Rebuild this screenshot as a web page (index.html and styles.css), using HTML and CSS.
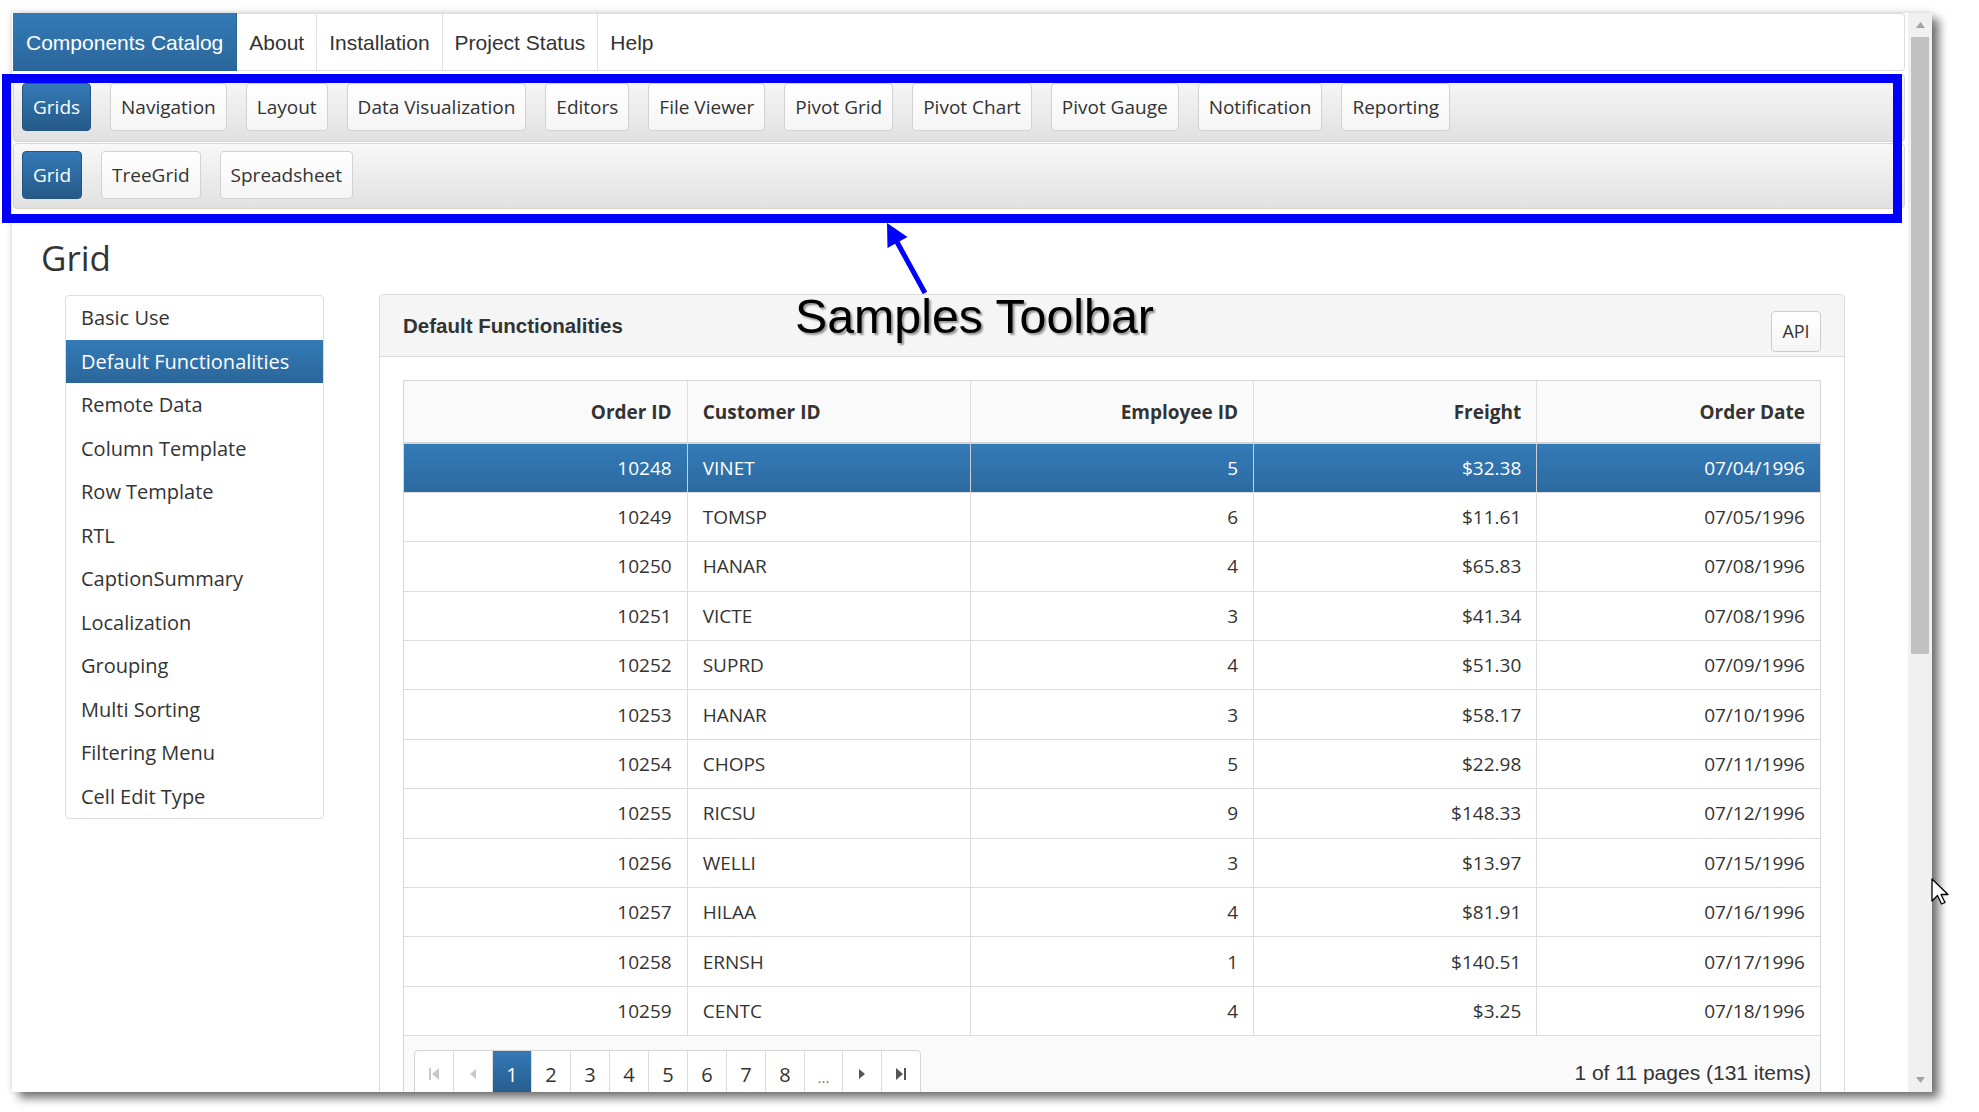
FILE: index.html
```html
<!DOCTYPE html>
<html lang="en">
<head>
<meta charset="utf-8">
<title>Components Catalog - Grid</title>
<link rel="stylesheet" href="styles.css">
</head>
<body>
<div class="window">
  <div class="viewport">
    <nav class="topnav">
      <a class="nav-item active">Components Catalog</a>
      <a class="nav-item">About</a>
      <a class="nav-item">Installation</a>
      <a class="nav-item">Project Status</a>
      <a class="nav-item">Help</a>
    </nav>
    <div class="band band-1">
      <button class="btn active">Grids</button>
      <button class="btn">Navigation</button>
      <button class="btn">Layout</button>
      <button class="btn">Data Visualization</button>
      <button class="btn">Editors</button>
      <button class="btn">File Viewer</button>
      <button class="btn">Pivot Grid</button>
      <button class="btn">Pivot Chart</button>
      <button class="btn">Pivot Gauge</button>
      <button class="btn">Notification</button>
      <button class="btn">Reporting</button>
    </div>
    <div class="band band-2">
      <button class="btn active">Grid</button>
      <button class="btn">TreeGrid</button>
      <button class="btn">Spreadsheet</button>
    </div>
    <div class="content">
      <h1 class="page-title">Grid</h1>
      <div class="columns">
        <ul class="sample-list">
          <li>Basic Use</li>
          <li class="active">Default Functionalities</li>
          <li>Remote Data</li>
          <li>Column Template</li>
          <li>Row Template</li>
          <li>RTL</li>
          <li>CaptionSummary</li>
          <li>Localization</li>
          <li>Grouping</li>
          <li>Multi Sorting</li>
          <li>Filtering Menu</li>
          <li>Cell Edit Type</li>
        </ul>
        <section class="panel">
          <header class="panel-head">
            <span class="panel-title">Default Functionalities</span>
            <button class="api-btn">API</button>
          </header>
          <div class="panel-body">
            <div class="grid">
              <table>
                <thead>
                  <tr>
                    <th>Order ID</th>
                    <th class="left">Customer ID</th>
                    <th>Employee ID</th>
                    <th>Freight</th>
                    <th>Order Date</th>
                  </tr>
                </thead>
                <tbody>
                  <tr class="selected"><td>10248</td><td class="left">VINET</td><td>5</td><td>$32.38</td><td>07/04/1996</td></tr>
                  <tr><td>10249</td><td class="left">TOMSP</td><td>6</td><td>$11.61</td><td>07/05/1996</td></tr>
                  <tr><td>10250</td><td class="left">HANAR</td><td>4</td><td>$65.83</td><td>07/08/1996</td></tr>
                  <tr><td>10251</td><td class="left">VICTE</td><td>3</td><td>$41.34</td><td>07/08/1996</td></tr>
                  <tr><td>10252</td><td class="left">SUPRD</td><td>4</td><td>$51.30</td><td>07/09/1996</td></tr>
                  <tr><td>10253</td><td class="left">HANAR</td><td>3</td><td>$58.17</td><td>07/10/1996</td></tr>
                  <tr><td>10254</td><td class="left">CHOPS</td><td>5</td><td>$22.98</td><td>07/11/1996</td></tr>
                  <tr><td>10255</td><td class="left">RICSU</td><td>9</td><td>$148.33</td><td>07/12/1996</td></tr>
                  <tr><td>10256</td><td class="left">WELLI</td><td>3</td><td>$13.97</td><td>07/15/1996</td></tr>
                  <tr><td>10257</td><td class="left">HILAA</td><td>4</td><td>$81.91</td><td>07/16/1996</td></tr>
                  <tr><td>10258</td><td class="left">ERNSH</td><td>1</td><td>$140.51</td><td>07/17/1996</td></tr>
                  <tr><td>10259</td><td class="left">CENTC</td><td>4</td><td>$3.25</td><td>07/18/1996</td></tr>
                </tbody>
              </table>
              <div class="pager">
                <div class="pages">
                  <span class="pg disabled"><svg width="12" height="14" viewBox="0 0 12 14"><rect x="1" y="1" width="2" height="12"/><path d="M11 1 L4 7 L11 13 Z"/></svg></span>
                  <span class="pg disabled"><svg width="8" height="14" viewBox="0 0 8 14"><path d="M7 2 L1 7 L7 12 Z"/></svg></span>
                  <span class="pg current">1</span>
                  <span class="pg">2</span>
                  <span class="pg">3</span>
                  <span class="pg">4</span>
                  <span class="pg">5</span>
                  <span class="pg">6</span>
                  <span class="pg">7</span>
                  <span class="pg">8</span>
                  <span class="pg dots">...</span>
                  <span class="pg"><svg width="8" height="14" viewBox="0 0 8 14"><path d="M1 2 L7 7 L1 12 Z"/></svg></span>
                  <span class="pg"><svg width="12" height="14" viewBox="0 0 12 14"><path d="M1 1 L8 7 L1 13 Z"/><rect x="9" y="1" width="2" height="12"/></svg></span>
                </div>
                <div class="pager-info">1 of 11 pages (131 items)</div>
              </div>
            </div>
          </div>
        </section>
      </div>
    </div>
  </div>
  <div class="scrollbar">
    <span class="sb-btn"><svg width="9" height="6" viewBox="0 0 9 6"><path d="M0 6 L4.5 0 L9 6 Z"/></svg></span>
    <span class="sb-thumb"></span>
    <span class="sb-fill"></span>
    <span class="sb-btn"><svg width="9" height="6" viewBox="0 0 9 6"><path d="M0 0 L4.5 6 L9 0 Z"/></svg></span>
  </div>
</div>

<div class="annot-box"></div>
<svg class="annot-arrow" width="70" height="90" viewBox="0 0 70 90">
  <line x1="27" y1="27" x2="55" y2="78" stroke="#0000ff" stroke-width="5"/>
  <path d="M17 8 L37.5 22 L17.5 33 Z" fill="#0000ff"/>
</svg>
<div class="annot-label">Samples Toolbar</div>
<svg class="cursor" width="20" height="30" viewBox="0 0 20 30">
  <path d="M1 1 L1 23 L6.5 17.5 L10.5 26 L14 24.5 L10 16.5 L17 16.5 Z" fill="#fff" stroke="#000" stroke-width="1.3" stroke-linejoin="round"/>
</svg>
</body>
</html>
```

FILE: styles.css
```css
html, body {
  margin: 0;
  padding: 0;
}

body {
  position: relative;
  width: 1979px;
  height: 1112px;
  overflow: hidden;
  background: #fff;
  font-family: "Open Sans", "Noto Sans", sans-serif;
  color: #333;
}

/* ---------- window frame ---------- */
.window {
  margin: 13px 0 0 12px;
  width: 1920px;
  height: 1079px;
  display: flex;
  background: #fff;
  box-shadow: 7px 6px 9px rgba(0, 0, 0, 0.55), -1px -1px 6px rgba(0, 0, 0, 0.12);
}

.viewport {
  flex: 1;
  min-width: 0;
  overflow: hidden;
  padding: 0 3px 0 1px;
}

/* ---------- top navigation ---------- */
.topnav {
  display: flex;
  height: 58px;
  box-sizing: border-box;
  border: 1px solid #ddd;
  border-left: none;
  border-radius: 0 4px 4px 0;
  background: #fff;
}

.nav-item {
  display: flex;
  align-items: center;
  padding: 2px 12px 0;
  font-family: "Liberation Sans", Arial, sans-serif;
  font-size: 21px;
  color: #333;
  border-right: 1px solid #e2e2e2;
}

.nav-item.active {
  color: #fff;
  padding: 2px 13px 0;
  margin: -1px 0;
  background: linear-gradient(#337ab7, #2b669a);
  border-right-color: #2b669a;
}

.nav-item:last-child {
  border-right: none;
}

/* ---------- sample toolbars ---------- */
.band {
  display: flex;
  align-items: flex-start;
  gap: 19px;
  box-sizing: border-box;
  border: 1px solid #d6d6d6;
  border-radius: 4px;
  background: linear-gradient(#f8f8f8, #e1e1e1);
  padding-left: 8px;
}

.band-1 {
  margin-top: 3px;
  height: 68px;
  padding-top: 8px;
}

.band-2 {
  margin-top: 1px;
  height: 66px;
  padding-top: 7px;
}

.btn {
  height: 48px;
  padding: 0 10px;
  font-family: "Open Sans", "Noto Sans", sans-serif;
  font-size: 19px;
  color: #333;
  background: linear-gradient(#ffffff, #f5f5f5);
  border: 1px solid #d2d2d2;
  border-radius: 4px;
}

.btn.active {
  color: #fff;
  background: linear-gradient(#337ab7, #265a88);
  border-color: #245580;
}

/* ---------- content ---------- */
.content {
  padding-left: 28px;
}

.page-title {
  margin: 29px 0 16px;
  font-size: 35px;
  line-height: 40px;
  font-weight: 400;
  color: #333;
}

.columns {
  display: flex;
  align-items: flex-start;
  gap: 55px;
  margin-left: 24px;
}

.sample-list {
  width: 259px;
  box-sizing: border-box;
  margin: 1px 0 0;
  padding: 0;
  list-style: none;
  border: 1px solid #ddd;
  border-radius: 4px;
  background: #fff;
}

.sample-list li {
  height: 43.5px;
  display: flex;
  align-items: center;
  padding-left: 15px;
  font-size: 20px;
  color: #333;
}

.sample-list li.active {
  color: #fff;
  background: linear-gradient(#337ab7, #2b669a);
}

/* ---------- panel ---------- */
.panel {
  width: 1466px;
  box-sizing: border-box;
  border: 1px solid #ddd;
  border-radius: 4px;
  background: #fff;
}

.panel-head {
  height: 62px;
  box-sizing: border-box;
  display: flex;
  align-items: center;
  justify-content: space-between;
  padding: 0 23px;
  background: #f5f5f5;
  border-bottom: 1px solid #ddd;
  border-radius: 4px 4px 0 0;
}

.panel-title {
  font-family: "Liberation Sans", Arial, sans-serif;
  font-weight: 700;
  font-size: 20.5px;
  color: #333;
}

.api-btn {
  width: 50px;
  height: 41px;
  margin-top: 11px;
  padding: 0;
  font-family: "Open Sans", "Noto Sans", sans-serif;
  font-size: 18px;
  color: #333;
  background: linear-gradient(#ffffff, #f5f5f5);
  border: 1px solid #ccc;
  border-radius: 4px;
}

.panel-body {
  padding: 23px 23px 0;
}

/* ---------- grid ---------- */
.grid {
  border: 1px solid #d8d8d8;
}

.grid table {
  width: 100%;
  border-collapse: collapse;
  table-layout: fixed;
}

.grid th,
.grid td {
  padding: 0 15px;
  text-align: right;
  font-size: 19px;
  color: #333;
  border-right: 1px solid #ddd;
  white-space: nowrap;
}

.grid th:last-child,
.grid td:last-child {
  border-right: none;
}

.grid th {
  height: 61px;
  font-weight: 700;
  background: #fafafa;
  border-bottom: 2px solid #d5d5d5;
}

.grid tbody tr {
  height: 49.4px;
}

.grid td {
  border-bottom: 1px solid #ddd;
}

.grid .left {
  text-align: left;
}

.grid tr.selected td {
  color: #fff;
  background: linear-gradient(#337ab7, #2c6aa0);
  border-right-color: #cfcfcf;
}

/* ---------- pager ---------- */
.pager {
  display: flex;
  justify-content: space-between;
  align-items: flex-start;
  height: 80px;
  padding: 14px 9px 0 10px;
  background: #fafafa;
}

.pages {
  display: flex;
  border: 1px solid #d5d5d5;
  border-radius: 4px;
  overflow: hidden;
  background: #fff;
}

.pg {
  width: 38px;
  height: 46px;
  display: flex;
  align-items: center;
  justify-content: center;
  font-size: 20px;
  color: #333;
  border-right: 1px solid #ddd;
}

.pg:last-child {
  border-right: none;
}

.pg svg {
  fill: #555;
}

.pg.disabled svg {
  fill: #c8c8c8;
}

.pg.current {
  color: #fff;
  background: linear-gradient(#337ab7, #265a88);
}

.pg.dots {
  font-size: 15px;
  color: #777;
  padding-top: 6px;
  box-sizing: border-box;
}

.pager-info {
  margin-top: 0;
  line-height: 46px;
  font-family: "Liberation Sans", Arial, sans-serif;
  font-size: 21px;
  color: #333;
}

/* ---------- scrollbar ---------- */
.scrollbar {
  width: 24px;
  display: flex;
  flex-direction: column;
  align-items: center;
  background: #f0f0f0;
}

.sb-btn {
  height: 24px;
  width: 24px;
  display: flex;
  align-items: center;
  justify-content: center;
}

.sb-btn svg {
  fill: #a3a3a3;
}

.sb-thumb {
  width: 18px;
  height: 617px;
  background: #c1c1c1;
}

.sb-fill {
  flex: 1;
}

/* ---------- annotation overlay ---------- */
.annot-box {
  position: absolute;
  left: 2px;
  top: 74px;
  width: 1900px;
  height: 149px;
  box-sizing: border-box;
  border: 9px solid #0000ff;
}

.annot-arrow {
  position: absolute;
  left: 870px;
  top: 215px;
}

.annot-label {
  position: absolute;
  left: 795px;
  top: 292px;
  font-family: "Liberation Sans", Arial, sans-serif;
  font-size: 48.3px;
  line-height: 1;
  color: #000;
  white-space: nowrap;
  text-shadow: 2px 2px 2px rgba(0, 0, 0, 0.4);
}

.cursor {
  position: absolute;
  left: 1931px;
  top: 878px;
}
```
